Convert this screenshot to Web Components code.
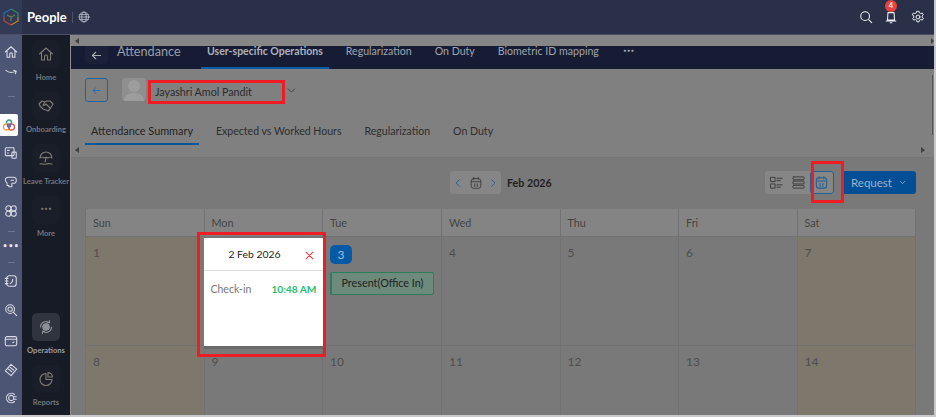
<!DOCTYPE html>
<html>
<head>
<meta charset="utf-8">
<title>People</title>
<style>
  html, body { margin: 0; height: 100%; overflow: hidden; background: #c9c9cc; }
  body { font-family: Lato, "Liberation Sans", sans-serif; }
</style>
</head>
<body>
<people-app></people-app>
<script>
const ic = (d, size = 16, color = 'currentColor', sw = 1.3) =>
  `<svg width="${size}" height="${size}" viewBox="0 0 16 16" fill="none" stroke="${color}" stroke-width="${sw}" stroke-linecap="round" stroke-linejoin="round">${d}</svg>`;

const ICONS = {
  home: '<path d="M1.5 8 8 2l6.5 6M3.5 7v7h3v-3.5a1.5 1.5 0 0 1 3 0V14h3V7"/>',
  shake: '<path d="M1 6 4 3l3 1 2-1 3 0 3 3-3 5-2 2-2-1-3-1-3-3zM7 4 5 7c1 1 2 0 3-1l4 4"/>',
  umbrella: '<path d="M2 8a6 6 0 0 1 12 0c-1-1-3-1-4 0-1-1-3-1-4 0-1-1-3-1-4 0zM8 8l-1 4M2 14c2-1 3 1 6 0s4 0 6 0"/>',
  ops: '<circle cx="8" cy="8" r="3.2" fill="currentColor"/><path d="M2.5 8a5.5 5.5 0 0 1 9-4.2M13.5 8a5.5 5.5 0 0 1-9 4.2M11.5 1.5v2.3H9.2M4.5 14.500v-2.300h2.300"/>',
  pie: '<path d="M8 2.500a6 6 0 1 0 6 6H8z"/><path d="M10 1.500a5 5 0 0 1 4.500 4.500H10z"/>',
  cal: '<rect x="2.500" y="3" width="11" height="11" rx="2.500"/><path d="M2.500 6.500h11M5.500 1.500V4M10.500 1.500V4M6.500 9v3M9.500 9v3"/>',
  search: '<circle cx="7" cy="7" r="5"/><path d="m11 11 3.500 3.500"/>',
  bell: '<path d="M4.500 3h7l.5 8.500H4zM2.500 12.500h11"/><path d="M7 14.500h2"/>',
  gear: '<circle cx="8" cy="8" r="2.200"/><path d="M6.800 1.500h2.400l.4 1.800 1.500.8 1.800-.6 1.200 2-1.400 1.300v1.400l1.400 1.300-1.200 2-1.800-.6-1.500.8-.4 1.800H6.800l-.4-1.800-1.500-.8-1.800.6-1.200-2 1.400-1.300V6.800L1.400 5.500l1.200-2 1.800.6 1.500-.8z"/>',
  globe: '<circle cx="8" cy="8" r="6.500"/><ellipse cx="8" cy="8" rx="3" ry="6.500"/><path d="M1.500 8h13M2.500 4.800h11M2.500 11.200h11"/>',
  left: '<path d="M13 8H3M7 4 3 8l4 4"/>',
  chev: '<path d="m4 6 4 4 4-4"/>',
  prev: '<path d="m10 3-5 5 5 5"/>',
  next: '<path d="m6 3 5 5-5 5"/>',
  list: '<rect x="2" y="2.500" width="4.500" height="4.500"/><rect x="2" y="9.500" width="4.500" height="4.500"/><path d="M8.500 3.500h5.500M8.500 6h3.500M8.500 10.500h5.500M8.500 13h3.500"/>',
  rows: '<rect x="2" y="2" width="12" height="3" rx="1"/><rect x="2" y="6.500" width="12" height="3" rx="1"/><rect x="2" y="11" width="12" height="3" rx="1"/>'
};

class NavItem extends HTMLElement {
  constructor() {
    super();
    this.attachShadow({mode: 'open'}).innerHTML = `<style>
      :host { display: flex; flex-direction: column; align-items: center; width: 48px; height: 52px; color: #74767d; font-size: 7.600px; font-weight: 700; }
      :host([active]) { color: #9a9da4; }
      .tile { width: 28px; height: 28px; border-radius: 5px; background: #1a1e29; display: flex; align-items: center; justify-content: center; color: #7f7c76; }
      :host([active]) .tile { background: #30343f; color: #8d9097; }
      .label { margin-top: 4px; line-height: 11px; white-space: nowrap; }
    </style><div class="tile">${ic(ICONS[this.getAttribute('icon')], 16, 'currentColor', 1.100)}</div><div class="label"><slot></slot></div>`;
  }
}
customElements.define('nav-item', NavItem);

class SideNav extends HTMLElement {
  constructor() {
    super();
    this.attachShadow({mode: 'open'}).innerHTML = `<style>
      :host { display: flex; flex-direction: column; justify-content: space-between; width: 48px; background: #171b26; padding: 5px 0 0; box-sizing: border-box; flex: none; }
      .low { margin-bottom: -2px; }
    </style>
    <div>
      <nav-item icon="home">Home</nav-item>
      <nav-item icon="shake">Onboarding</nav-item>
      <nav-item icon="umbrella">Leave Tracker</nav-item>
      <nav-item icon="home" id="more">More</nav-item>
    </div>
    <div class="low">
      <nav-item icon="ops" active>Operations</nav-item>
      <nav-item icon="pie">Reports</nav-item>
    </div>`;
    // More uses dots instead of an icon
    this.shadowRoot.querySelector('#more').shadowRoot.querySelector('.tile').innerHTML = '<span style="font:700 6px/7px \'DejaVu Sans\',sans-serif;margin-top:-4px">&bull;&bull;&bull;</span>';
  }
}
customElements.define('side-nav', SideNav);

class AppRail extends HTMLElement {
  constructor() {
    super();
    const glyph = (d, h) => `<div class="i" style="height:${h}px">${ic(d, 14, '#d9dce6', 1.200)}</div>`;
    const dash = h => `<div class="i" style="height:${h}px"><i></i></div>`;
    this.attachShadow({mode: 'open'}).innerHTML = `<style>
      :host { display: block; width: 22px; background: #4d5574; flex: none; padding-top: 7px; box-sizing: border-box; }
      .i { display: flex; align-items: center; justify-content: center; }
      i { display: block; width: 7px; height: 1px; background: #6f7690; }
      .active { width: 18px; height: 22px; background: #fff; border-radius: 0 2px 2px 0; display: flex; align-items: center; justify-content: center; margin: 4px 0; }
      .dots { color: #e6e8ef; font-size: 8px; line-height: 10px; font-weight: 900; letter-spacing: .5px; font-family: "DejaVu Sans", sans-serif; }
    </style>
    ${glyph(ICONS.home, 20)}
    ${glyph('<path d="M2 6c3 3 8 3 12 1M11 6l3 1-1 3"/>', 20)}
    ${dash(28)}
    <div class="active"><svg width="14" height="14" viewBox="0 0 14 14" fill="none" stroke-width="1.300"><circle cx="7" cy="4.500" r="2.500" stroke="#2e9d8f"/><circle cx="4.500" cy="9" r="3" stroke="#e8a33c"/><circle cx="9.500" cy="9" r="3" stroke="#e0574f"/><circle cx="7" cy="7.500" r="1.600" stroke="#3a6fc4"/></svg></div>
    ${glyph('<rect x="1.500" y="2" width="10" height="9" rx="1"/><path d="M4 5h2M4 8h1"/><rect x="9" y="7" width="5" height="7" rx="1"/>', 26)}
    ${glyph('<path d="M5 2.500h6a3 3 0 0 1 3 3v1a3 3 0 0 1-3 3H9v4H5.500v-1.500H3.500V9A4 4 0 0 1 1.500 6a3.500 3.500 0 0 1 3.500-3.500zM8 6h3"/>', 32)}
    ${glyph('<circle cx="5" cy="5" r="3"/><circle cx="11" cy="5" r="3"/><circle cx="5" cy="11" r="3"/><circle cx="11" cy="11" r="3"/><circle cx="8" cy="8" r="1.500"/>', 26)}
    ${dash(14)}
    <div class="i dots" style="height:18px">&bull;&bull;&bull;</div>
    ${dash(12)}
    ${glyph('<rect x="3" y="2" width="11" height="12" rx="3"/><path d="M1.500 5h3M1.500 8h3M1.500 11h3M7 11c2-1 3-3 3-5"/>', 26)}
    ${glyph('<circle cx="7" cy="7" r="5"/><circle cx="7" cy="7" r="2.500"/><path d="m10.500 10.500 4 4"/>', 32)}
    ${glyph('<rect x="1.500" y="3" width="13" height="10.500" rx="2"/><path d="M1.500 6h13M10 10l1.500-1"/>', 30)}
    ${glyph('<path d="M8 1.500 14.500 7 8 14.500 1.500 9zM5 7l4 3M7 5l4 3"/>', 28)}
    ${glyph('<path d="M12 4a5.500 5.500 0 1 0 0 8M10.500 6a3 3 0 1 0 0 4M14 6.500h-3v3h3"/>', 28)}`;
  }
}
customElements.define('app-rail', AppRail);

class TopBar extends HTMLElement {
  constructor() {
    super();
    this.attachShadow({mode: 'open'}).innerHTML = `<style>
      :host { display: flex; align-items: center; height: 34px; background: #2a3048; color: #fff; flex: none; border-bottom: 1px solid #4b5066; box-sizing: content-box; }
      .logo { width: 22px; height: 34px; background: #333a56; display: flex; align-items: center; justify-content: center; flex: none; }
      .title { margin-left: 5px; font-size: 13px; font-weight: 700; }
      .sep { width: 1px; height: 11px; background: #4d5268; margin: 0 5px; }
      .globe { display: flex; color: #c8cddd; }
      .right { margin-left: auto; display: flex; align-items: center; padding-right: 9px; color: #eef0f5; }
      .bell { position: relative; display: flex; margin: 0 13px 0 11px; }
      .badge { position: absolute; top: -10px; left: 1px; width: 12px; height: 12px; border-radius: 50%; background: #e8413f; font-size: 7.500px; font-weight: 700; line-height: 12px; text-align: center; }
      .right svg { display: block; }
    </style>
    <div class="logo"><svg width="18" height="18" viewBox="0 0 18 18" fill="none" stroke-width="1.200"><path d="M9 1 16 5v4" stroke="#2f8f5f"/><path d="M16 9v4l-7 4" stroke="#b98a2a"/><path d="M9 17 2 13V9" stroke="#b5463c"/><path d="M2 9V5l7-4" stroke="#2b6db0"/><path d="M5 7l4 2 4-2M9 9v4" stroke="#6a7f4a"/></svg></div>
    <div class="title">People</div>
    <div class="sep"></div>
    <div class="globe">${ic(ICONS.globe, 12, 'currentColor', 1)}</div>
    <div class="right">
      ${ic(ICONS.search, 14, 'currentColor', 1.200)}
      <div class="bell">${ic(ICONS.bell, 14, 'currentColor', 1.200)}<span class="badge">4</span></div>
      ${ic(ICONS.gear, 14, 'currentColor', 1.100)}
    </div>`;
  }
}
customElements.define('top-bar', TopBar);

class ScrollStrip extends HTMLElement {
  constructor() {
    super();
    this.attachShadow({mode: 'open'}).innerHTML = `<style>
      :host { display: flex; align-items: center; justify-content: space-between; height: 11px; background: #868686; padding: 0 0 0 4px; flex: none; }
      b { width: 0; height: 0; border: 3px solid transparent; border-left-width: 0; border-right: 4px solid #3f3f3f; }
      b.r { border-right-width: 0; border-left: 3px solid #3f3f3f; }
    </style><b></b><b class="r"></b>`;
  }
}
customElements.define('scroll-strip', ScrollStrip);

class TabBand extends HTMLElement {
  constructor() {
    super();
    this.attachShadow({mode: 'open'}).innerHTML = `<style>
      :host { display: flex; height: 23px; background: #151c34; color: #a0a4af; flex: none; font-size: 10.600px; padding-left: 14px; box-sizing: border-box; }
      .back { width: 23px; height: 18px; background: #1a2138; border-radius: 0 0 4px 4px; display: flex; align-items: center; justify-content: center; color: #a8acb6; }
      .head { margin-left: 9px; font-size: 12.700px; width: 75px; line-height: 11px; color: #9b9fab; }
      .tab { padding: 0 6px; line-height: 11px; height: 23px; box-sizing: border-box; white-space: nowrap; margin-right: 11px; }
      .on { font-weight: 700; font-size: 10.500px; color: #aeb2bc; border-bottom: 2px solid #0a5ea8; margin-left: 9px; }
      .more { font-size: 6px; line-height: 9px; margin-left: 7px; font-family: "DejaVu Sans", sans-serif; font-weight: 700; }
    </style>
    <div class="back">${ic(ICONS.left, 13, 'currentColor', 1.400)}</div>
    <div class="head">Attendance</div>
    <div class="tab on">User-specific Operations</div>
    <div class="tab">Regularization</div>
    <div class="tab">On Duty</div>
    <div class="tab">Biometric ID mapping</div>
    <div class="more">&bull;&bull;&bull;</div>`;
  }
}
customElements.define('tab-band', TabBand);

class EmployeeHeader extends HTMLElement {
  constructor() {
    super();
    this.attachShadow({mode: 'open'}).innerHTML = `<style>
      :host { display: block; height: 88px; background: #808080; flex: none; box-sizing: border-box; padding: 9px 0 0 14px; color: #2b2b2b; position: relative; }
      .who { display: flex; align-items: flex-start; }
      .back { width: 23px; height: 24px; box-sizing: border-box; border: 1px solid #24629c; border-radius: 3px; display: flex; align-items: center; justify-content: center; color: #2a6fb0; margin-right: 14px; }
      .avatar { width: 24px; height: 23px; border-radius: 4px; background: #8f8f8f; overflow: hidden; }
      .name { box-sizing: border-box; width: 137px; height: 24px; border: 3px solid #ee1c25; margin: 2px 0 0 2px; padding-left: 4px; font-size: 10.700px; line-height: 17px; white-space: nowrap; }
      .chev { margin-top: 6px; color: #3c3c3c; display: flex; }
      .tabs { display: flex; margin-top: 20px; font-size: 10.550px; }
      .tabs div { padding: 0 6px 5px; margin-right: 11px; white-space: nowrap; line-height: 14px; color: #2e2e2e; }
      .tabs .on { border-bottom: 2px solid #07569c; color: #222; font-size: 10.860px; }
      b { position: absolute; top: 78px; width: 0; height: 0; border: 3px solid transparent; }
      .l { left: 4px; border-left-width: 0; border-right: 4px solid #3f3f3f; }
      .r { right: 9px; border-right-width: 0; border-left: 4px solid #3f3f3f; }
      .thumb { position: absolute; right: 1px; top: 6px; width: 1px; height: 60px; background: #555; }
    </style>
    <div class="who">
      <div class="back">${ic(ICONS.left, 11, 'currentColor', 1.500)}</div>
      <div class="avatar"><svg width="24" height="23" viewBox="0 0 24 23"><circle cx="12" cy="8" r="6" fill="#9d9d9d"/><path d="M2 23c0-6 5-8 10-8s10 2 10 8z" fill="#9d9d9d"/></svg></div>
      <div class="name">Jayashri Amol Pandit</div>
      <div class="chev">${ic(ICONS.chev, 13, 'currentColor', 1.100)}</div>
    </div>
    <div class="tabs">
      <div class="on">Attendance Summary</div>
      <div>Expected vs Worked Hours</div>
      <div>Regularization</div>
      <div>On Duty</div>
    </div>
    <b class="l"></b><b class="r"></b><span class="thumb"></span>`;
  }
}
customElements.define('employee-header', EmployeeHeader);

class CalToolbar extends HTMLElement {
  constructor() {
    super();
    this.attachShadow({mode: 'open'}).innerHTML = `<style>
      :host { display: flex; align-items: center; height: 23px; position: relative; }
      .center { position: absolute; left: 365px; display: flex; align-items: center; }
      .nav { width: 51px; height: 23px; background: #868686; border-radius: 3px; display: flex; align-items: center; justify-content: space-between; padding: 0 3px; box-sizing: border-box; color: #1f5f9e; }
      .nav span { color: #3a3a3a; display: flex; }
      .month { margin-left: 6px; font-size: 10.700px; font-weight: 700; color: #1f1f1f; }
      .right { margin-left: auto; display: flex; align-items: center; gap: 8px; }
      .views { display: flex; width: 69px; height: 23px; background: #868686; border-radius: 3px; color: #3a3a3a; }
      .views div { flex: 1; display: flex; align-items: center; justify-content: center; border-radius: 3px; box-sizing: border-box; }
      .views .on { border: 1px solid #245f97; color: #245f97; }
      .req { width: 74px; height: 23px; background: #024f96; border-radius: 3px; color: #9db2c8; font-size: 11.500px; display: flex; align-items: center; justify-content: center; gap: 6px; }
      .mark { position: absolute; right: 72px; top: -10px; width: 33px; height: 42px; border: 3px solid #ee1c25; box-sizing: border-box; }
    </style>
    <div class="center">
      <div class="nav">${ic(ICONS.prev, 10, 'currentColor', 1.500)}<span>${ic(ICONS.cal, 14, 'currentColor', 1)}</span>${ic(ICONS.next, 10, 'currentColor', 1.500)}</div>
      <div class="month">Feb 2026</div>
    </div>
    <div class="right">
      <div class="views">
        <div>${ic(ICONS.list, 15, 'currentColor', 1)}</div>
        <div>${ic(ICONS.rows, 15, 'currentColor', 1)}</div>
        <div class="on">${ic(ICONS.cal, 15, 'currentColor', 1.100)}</div>
      </div>
      <div class="req">Request ${ic(ICONS.chev, 9, 'currentColor', 1.400)}</div>
    </div>
    <span class="mark"></span>`;
  }
}
customElements.define('cal-toolbar', CalToolbar);

class DayCell extends HTMLElement {
  constructor() {
    super();
    this.attachShadow({mode: 'open'}).innerHTML = `<style>
      :host { display: block; box-sizing: border-box; border-right: 1px solid #727272; border-bottom: 1px solid #727272; padding: 9px 7px; font-size: 12px; color: #4e4e4e; position: relative; line-height: 14px; }
      :host([off]) { background: #7d776c; }
    </style><slot></slot>`;
  }
}
customElements.define('day-cell', DayCell);

class DayPopup extends HTMLElement {
  constructor() {
    super();
    this.attachShadow({mode: 'open'}).innerHTML = `<style>
      :host { position: absolute; left: -8px; top: -5px; width: 129px; height: 125px; box-sizing: border-box; border: 3px solid #ee1c25; padding: 3px 0 0 4px; z-index: 2; color: #222; }
      .box { background: #fff; height: 108px; box-shadow: 0 3px 0 #6a6a6a; }
      .top { height: 32px; border-bottom: 1px solid #ddd; display: flex; align-items: center; position: relative; justify-content: center; padding-right: 17px; font-size: 10.400px; }
      .x { position: absolute; right: 8px; top: 12px; display: flex; }
      .row { display: flex; justify-content: space-between; padding: 11px 6px 0 7px; font-size: 10.500px; line-height: 14px; }
      .row span { color: #777; }
      .row strong { color: #1fc06f; font-weight: 700; font-size: 10.200px; }
    </style>
    <div class="box">
      <div class="top">2 Feb 2026<span class="x">${ic('<path d="m3 3 10 10M13 3 3 13"/>', 11, '#f0404c', 1.600)}</span></div>
      <div class="row"><span>Check-in</span><strong>10:48 AM</strong></div>
    </div>`;
  }
}
customElements.define('day-popup', DayPopup);

class MonthGrid extends HTMLElement {
  constructor() {
    super();
    const heads = ['Sun','Mon','Tue','Wed','Thu','Fri','Sat'].map(d => `<div class="h">${d}</div>`).join('');
    let cells = '';
    for (let d = 1; d <= 14; d++) {
      const off = d % 7 === 0 || d % 7 === 1 ? ' off' : '';
      let inner = d;
      if (d === 2) inner = '<day-popup></day-popup>';
      if (d === 3) inner = '<span class="today">3</span><div class="pill">Present(Office In)</div>';
      cells += `<day-cell${off}>${inner}</day-cell>`;
    }
    this.attachShadow({mode: 'open'}).innerHTML = `<style>
      :host { display: grid; grid-template-columns: repeat(7, 1fr); grid-template-rows: 28px 109px 110px; margin-top: 15px; border-left: 1px solid #727272; }
      .h { background: #848484; border-right: 1px solid #727272; border-bottom: 1px solid #727272; padding: 0 7px; line-height: 27px; font-size: 10.800px; color: #444; }
      .today { display: block; width: 22px; height: 19px; border-radius: 5px; background: #0559a5; color: #a9bdd3; text-align: center; line-height: 19px; font-size: 12px; }
      .pill { box-sizing: border-box; width: 104px; height: 23px; margin-top: 8px; border: 1px solid #2e7d5a; border-left-width: 2px; border-radius: 2px; background: #6d8a7c; color: #222; font-size: 10.800px; line-height: 20px; text-align: center; white-space: nowrap; }
      day-cell:nth-of-type(3) { padding-top: 8px; }
    </style>${heads}${cells}`;
  }
}
customElements.define('month-grid', MonthGrid);

class CalendarPane extends HTMLElement {
  constructor() {
    super();
    this.attachShadow({mode: 'open'}).innerHTML = `<style>
      :host { display: block; flex: 1; min-height: 0; background: #797979; padding: 13px 18px 0 14px; border-top: 1px solid #757575; overflow: hidden; position: relative; box-sizing: border-box; }
    </style><cal-toolbar></cal-toolbar><month-grid></month-grid>`;
  }
}
customElements.define('calendar-pane', CalendarPane);

class PeopleApp extends HTMLElement {
  constructor() {
    super();
    this.attachShadow({mode: 'open'}).innerHTML = `<style>
      :host { display: flex; flex-direction: column; width: 934px; height: 415px; overflow: hidden; font-family: Lato, "Liberation Sans", sans-serif; }
      .body { display: flex; flex: 1; min-height: 0; }
      main { flex: 1; min-width: 0; display: flex; flex-direction: column; background: #808080; border-left: 1px solid #8e8e8e; }
    </style>
    <top-bar></top-bar>
    <div class="body">
      <app-rail></app-rail>
      <side-nav></side-nav>
      <main>
        <scroll-strip></scroll-strip>
        <tab-band></tab-band>
        <employee-header></employee-header>
        <calendar-pane></calendar-pane>
      </main>
    </div>`;
  }
}
customElements.define('people-app', PeopleApp);
</script>
</body>
</html>
